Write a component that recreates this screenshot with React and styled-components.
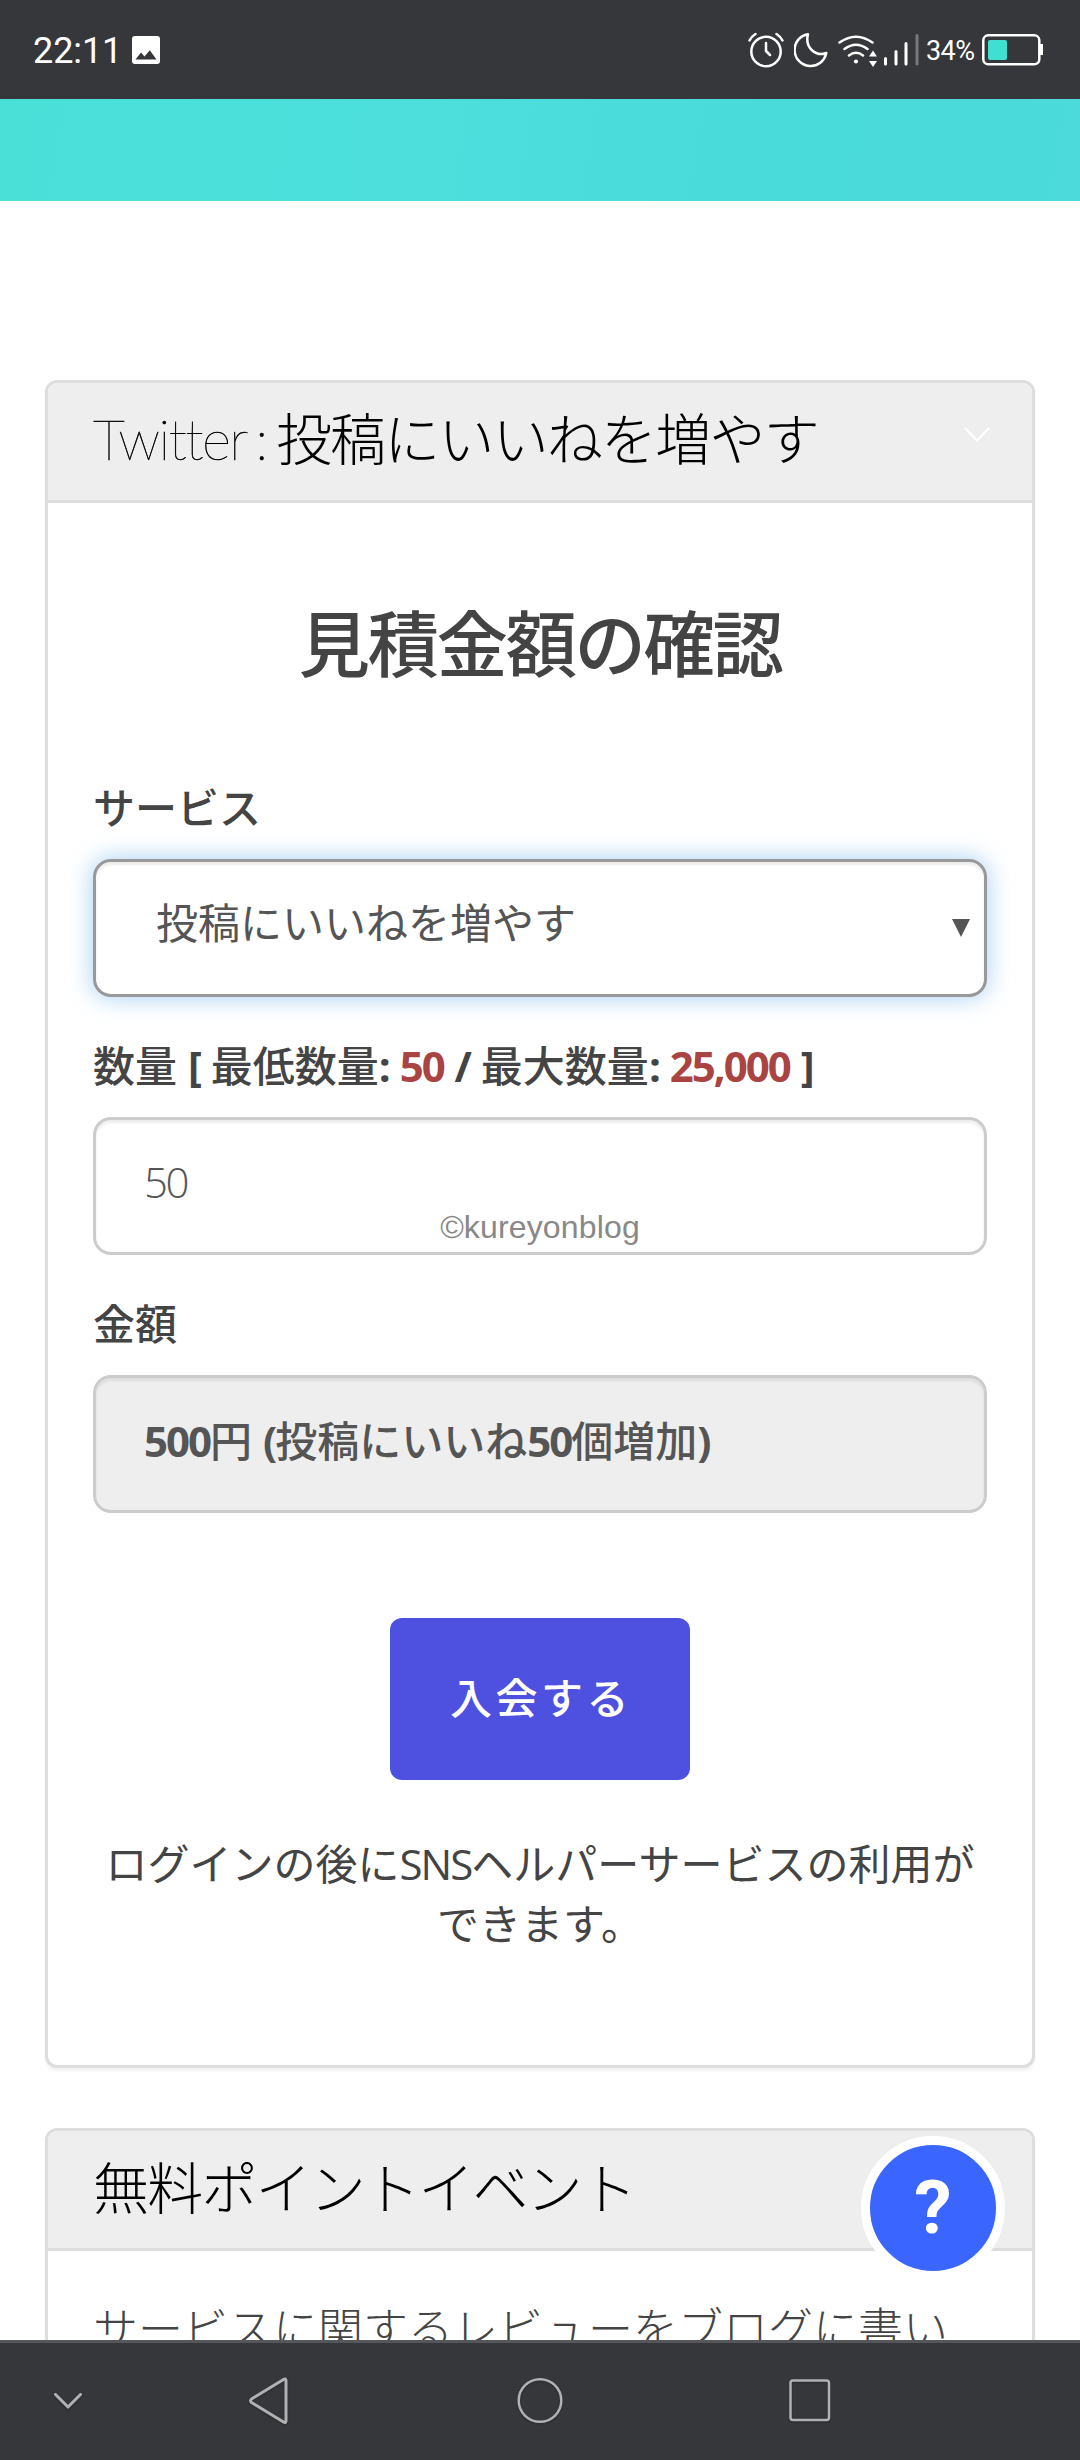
import React from "react";
import styled, { createGlobalStyle } from "styled-components";

const Global = createGlobalStyle`
  *, *::before, *::after { box-sizing: border-box; }
  html, body { margin: 0; padding: 0; }
  body {
    background: #fff;
    color: #444;
    font-family: "Open Sans", "Noto Sans CJK JP", sans-serif;
  }
`;

const Screen = styled.div`
  position: relative;
  display: flex;
  flex-direction: column;
  width: 1080px;
  height: 2460px;
  overflow: hidden;
`;

const StatusBar = styled.header`
  flex: none;
  display: flex;
  align-items: center;
  justify-content: space-between;
  height: 99px;
  padding: 0 37px 0 33px;
  background: #36373b;
  color: #fff;
  font-family: Roboto, sans-serif;
`;

const StatusGroup = styled.div`
  display: flex;
  align-items: center;
`;

const Clock = styled.span`
  width: 99px;
  font-size: 36px;
  line-height: 42px;
  padding-top: 2px;
  letter-spacing: -0.1px;
`;

const Icon = styled.svg`
  display: block;
  flex: none;
  margin-left: ${(p) => p.$gap || 0}px;
  fill: none;
  stroke: #fff;
  stroke-width: ${(p) => p.$stroke || 2.5};
  stroke-linecap: round;
  stroke-linejoin: round;
`;

const Percent = styled.span`
  width: 51px;
  margin-left: 7px;
  padding-top: 2px;
  font-size: 27px;
  line-height: 32px;
  letter-spacing: -0.6px;
`;

const Banner = styled.div`
  flex: none;
  height: 102px;
  background: linear-gradient(100deg, #4ae0d8 0%, #4cdfdc 38%, #49dada 72%, #4cdada 100%);
`;

const Page = styled.main`
  flex: 1;
  min-height: 0;
  overflow: hidden;
  display: flex;
  flex-direction: column;
  gap: 60px;
  padding: 179px 45px 0;
`;

const Card = styled.section`
  flex: none;
  border: 3px solid #ddd;
  border-radius: 12px;
  background: #fff;
  box-shadow: 0 3px 3px rgba(0, 0, 0, 0.05);
`;

const CardHeader = styled.div`
  display: flex;
  align-items: center;
  justify-content: space-between;
  height: 120px;
  padding: 0 42px 6px 45px;
  border-bottom: 3px solid #ddd;
  border-radius: 9px 9px 0 0;
  background: #eee;
`;

const Toggle = styled.span`
  display: flex;
  padding-bottom: 8px;
`;

const CardTitle = styled.h3`
  margin: 0;
  color: #000;
  font-family: "Open Sans", "Noto Sans CJK JP", sans-serif;
  font-size: 56px;
  font-weight: 300;
  line-height: 76px;
  letter-spacing: -1.8px;
  white-space: nowrap;
`;

const TitleLatin = styled.span`
  font-family: Lato, sans-serif;
  font-weight: 100;
  letter-spacing: -1.6px;
  word-spacing: -5px;
  -webkit-text-stroke: 0.5px #000;
`;

const CardBody = styled.div`
  display: flex;
  flex-direction: column;
  align-items: stretch;
  padding: 90px 45px 111px;
`;

const Heading = styled.h2`
  margin: 0 0 83px;
  text-align: center;
  font-size: 71.5px;
  font-weight: 500;
  line-height: 102px;
  letter-spacing: -2.5px;
`;

const Field = styled.div`
  display: flex;
  flex-direction: column;
  gap: 21px;
  margin-bottom: 39px;
`;

const Label = styled.label`
  height: 60px;
  font-size: 42px;
  font-weight: 700;
  line-height: 60px;
  letter-spacing: -2px;
  word-spacing: 2px;
  white-space: pre;
`;

const Cjk = styled.span`
  font-weight: 500;
  letter-spacing: 0;
`;

const Limit = styled.span`
  color: #a94442;
`;

const Control = styled.div`
  position: relative;
  display: flex;
  align-items: center;
  justify-content: space-between;
  height: 138px;
  padding: 0 14px ${(p) => p.$lift || 8}px ${(p) => p.$indent || 48}px;
  border: 3px solid ${(p) => (p.$focused ? "#999" : "#ccc")};
  border-radius: 18px;
  background: ${(p) => (p.$disabled ? "#eee" : "#fff")};
  box-shadow: inset 0 3px 3px rgba(0, 0, 0, 0.075)
    ${(p) => (p.$focused ? ", 0 0 24px rgba(102, 175, 233, 0.6)" : "")};
  color: #555;
  font-size: 42px;
  font-weight: ${(p) => p.$weight || 400};
  line-height: 60px;
  letter-spacing: ${(p) => p.$spacing || 0}px;
  white-space: pre;
`;

const Caret = styled.svg`
  display: block;
  margin-top: 10px;
  fill: #555;
`;

const Watermark = styled.span`
  position: absolute;
  left: 0;
  right: 0;
  bottom: 6px;
  text-align: center;
  color: #888;
  font-family: "Liberation Sans", sans-serif;
  font-size: 32px;
  font-weight: 400;
  line-height: 38px;
  letter-spacing: 0.15px;
`;

const JoinButton = styled.button`
  align-self: center;
  width: 300px;
  height: 162px;
  margin-top: 66px;
  padding: 0 0 7px 2px;
  border: 0;
  border-radius: 12px;
  background: #4e51e0;
  color: #fff;
  font-family: inherit;
  font-size: 42px;
  font-weight: 500;
  letter-spacing: 3.5px;
`;

const Note = styled.p`
  margin: 54px 0 0;
  text-align: center;
  font-size: 42px;
  line-height: 60px;
`;

const Acronym = styled.span`
  letter-spacing: -2px;
`;

const Review = styled.p`
  margin: 0;
  padding: 44px 0 0 45px;
  font-size: 45px;
  font-weight: 300;
  line-height: 68px;
  white-space: nowrap;
`;

const HelpButton = styled.button`
  position: absolute;
  left: 861px;
  top: 2136px;
  display: flex;
  align-items: center;
  justify-content: center;
  width: 144px;
  height: 144px;
  padding: 0 0 2px;
  border: 9px solid #fff;
  border-radius: 50%;
  background: #3a66ff;
  color: #fff;
  font-family: Roboto, sans-serif;
  font-size: 75px;
  font-weight: 700;
  line-height: 90px;
`;

const NavBar = styled.nav`
  flex: none;
  display: flex;
  align-items: center;
  height: 120px;
  padding: 0 0 2px 48px;
  border-top: 3px solid #56575b;
  background: #36373b;
`;

const NavIcon = styled(Icon)`
  stroke: #b0b1b3;
  filter: drop-shadow(0 1px 1px rgba(0, 0, 0, 0.25));
`;

export default function App() {
  return (
    <Screen>
      <Global />
      <StatusBar>
        <StatusGroup>
          <Clock>22:11</Clock>
          <svg width="28" height="28" viewBox="0 0 28 28">
            <rect width="28" height="28" rx="3" fill="#fff" />
            <path d="M3.5 23.5L9 16.5L12.5 20.5L17.8 14.2L24.5 23.5Z" fill="#36373b" />
          </svg>
        </StatusGroup>
        <StatusGroup>
          <Icon width="36" height="36" viewBox="0 0 36 36">
            <circle cx="18" cy="19.5" r="14.7" />
            <path d="M18 11V19L22 23M1.5 8.5Q3.5 4.5 7.5 2M34.5 8.5Q32.5 4.5 28.5 2" />
          </Icon>
          <Icon width="34" height="36" viewBox="0 0 34 36" $gap={10}>
            <path d="M14 2.2A16 16 0 1 0 32.3 21C22 25 10.5 16 14 2.2Z" />
          </Icon>
          <Icon width="40" height="36" viewBox="0 0 40 36" $gap={10}>
            <path d="M1.5 10.5Q18 -1 34.5 10.5M6.5 17Q18 8.5 29.5 17M11 23.5Q18 18 25 23.5" />
            <circle cx="18" cy="29.5" r="2.1" fill="#fff" stroke="none" />
            <path d="M35 18.5L39 24.5H31ZM35 35L39 29H31Z" fill="#fff" stroke="none" />
          </Icon>
          <Icon width="35" height="36" viewBox="0 0 35 36" $gap={6} $stroke={3}>
            <path d="M1.5 26.5V32M12 19.5V32M22 11.5V32" />
            <path d="M33 3.5V32" stroke="#77787b" />
          </Icon>
          <Percent>34%</Percent>
          <Icon width="61" height="34" viewBox="0 0 61 34" $gap={5}>
            <rect x="1.3" y="2.3" width="56" height="29" rx="5" />
            <rect x="6" y="7" width="19" height="20" rx="2" fill="#40e0d0" stroke="none" />
            <path d="M59.5 11V22" strokeWidth="3" strokeLinecap="butt" />
          </Icon>
        </StatusGroup>
      </StatusBar>
      <Banner />
      <Page>
        <Card>
          <CardHeader>
            <CardTitle>
              <TitleLatin>Twitter : </TitleLatin>投稿にいいねを増やす
            </CardTitle>
            <Toggle>
              <Icon width="26" height="16" viewBox="0 0 26 16" $stroke={2}>
                <path d="M1.5 1.5L13 13.5L24.5 1.5" />
              </Icon>
            </Toggle>
          </CardHeader>
          <CardBody>
            <Heading>見積金額の確認</Heading>
            <Field>
              <Label>
                <Cjk>サービス</Cjk>
              </Label>
              <Control $focused $indent={60} $lift={11}>
                投稿にいいねを増やす
                <Caret width="18" height="18" viewBox="0 0 18 18">
                  <path d="M0 0H18L9 18Z" />
                </Caret>
              </Control>
            </Field>
            <Field>
              <Label>
                <Cjk>数量</Cjk> [ <Cjk>最低数量</Cjk>: <Limit>50</Limit> / <Cjk>最大数量</Cjk>:{" "}
                <Limit>25,000</Limit> ]
              </Label>
              <Control $weight={300} $lift={9} $spacing={-2.5}>
                50
                <Watermark>©kureyonblog</Watermark>
              </Control>
            </Field>
            <Field>
              <Label>
                <Cjk>金額</Cjk>
              </Label>
              <Control $disabled $lift={6}>
                <Label as="span">
                  500<Cjk>円</Cjk> (<Cjk>投稿にいいね</Cjk>50<Cjk>個増加</Cjk>)
                </Label>
              </Control>
            </Field>
            <JoinButton>入会する</JoinButton>
            <Note>
              ログインの後に<Acronym>SNS</Acronym>ヘルパーサービスの利用が
              <br />
              できます。
            </Note>
          </CardBody>
        </Card>
        <Card>
          <CardHeader>
            <CardTitle>無料ポイントイベント</CardTitle>
          </CardHeader>
          <Review>サービスに関するレビューをブログに書い</Review>
        </Card>
      </Page>
      <NavBar>
        <NavIcon width="40" height="30" viewBox="0 0 40 30" $stroke={3}>
          <path d="M7.5 8.5L20 21L32.5 8.5" />
        </NavIcon>
        <NavIcon width="42" height="50" viewBox="0 0 42 50" $gap={160} $stroke={3}>
          <path d="M35.5 3.5Q38 2 38 5V44.500Q38 47.500 35.500 46L3.500 26.500Q1.500 24.800 3.500 23Z" />
        </NavIcon>
        <NavIcon width="50" height="50" viewBox="0 0 50 50" $gap={225}>
          <circle cx="25" cy="24.500" r="21.300" />
        </NavIcon>
        <NavIcon width="44" height="46" viewBox="0 0 44 46" $gap={223}>
          <rect x="2.500" y="2.500" width="38.500" height="39.500" rx="2.500" />
        </NavIcon>
      </NavBar>
      <HelpButton>?</HelpButton>
    </Screen>
  );
}
